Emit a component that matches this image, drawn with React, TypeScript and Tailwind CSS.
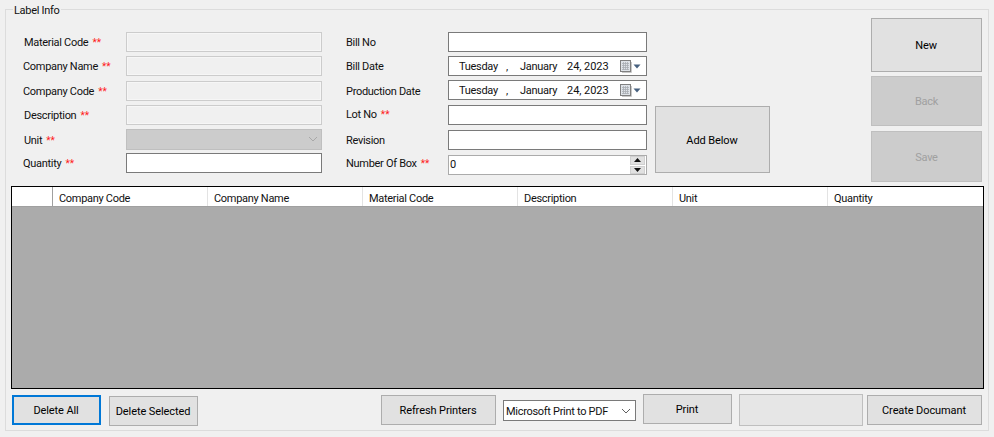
import { ReactNode } from "react";

const base = "border border-[#adadad] bg-[#e1e1e1] text-black tracking-[-0.1px] flex items-center justify-center pt-[3px] pr-px";
const off = "border border-[#bfbfbf] bg-[#cccccc] text-[#a0a0a0] flex items-center justify-center pt-[3px]";
const fieldOff = "w-[196px] h-5 border border-[#cccccc] bg-[#f0f0f0] shadow-[inset_0_0_0_1px_#f6f6f6]";
const fieldOn = "w-[199px] h-5 border border-[#7a7a7a] bg-white";

function Stars() {
  return <span className="ml-1 text-[#ff1a1a] text-[10px] tracking-normal">**</span>;
}

function Row({ label, stars, className, labelClass, children }: { label: string; stars?: boolean; className?: string; labelClass?: string; children: ReactNode }) {
  return (
    <div className={`flex items-center h-5 ${className ?? ""}`}>
      <div className={`w-[102px] shrink-0 whitespace-nowrap pt-[3px] ${labelClass ?? ""}`}>
        {label}
        {stars && <Stars />}
      </div>
      {children}
    </div>
  );
}

function Chevron({ color }: { color: string }) {
  return (
    <svg width="10" height="6" viewBox="0 0 10 6" fill="none" stroke={color}>
      <path d="M1 1l4 4 4-4" />
    </svg>
  );
}

function DateField() {
  return (
    <div className={`${fieldOn} flex items-center pl-[10px]`}>
      <span className="w-[47px] pt-[3px]">Tuesday</span>
      <span className="w-[14px] pt-[3px]">,</span>
      <span className="w-[47px] pt-[3px]">January</span>
      <span className="w-[53px] pt-[3px] tracking-[-0.05px]">24, 2023</span>
      <svg width="22" height="13" viewBox="0 0 22 13">
        <rect x="0.5" y="0.500" width="10" height="11" fill="#dfe3e8" stroke="#808080" />
        <path d="M2 3.500h7M2 5.500h7M2 7.500h7M2 9.500h7M3.500 2v8M5.500 2v8M7.500 2v8" stroke="#a8adb3" strokeWidth="0.8" />
        <path d="M11.500 2v10.500H2" stroke="#c9c9c9" fill="none" />
        <path d="M13.500 4.500h7l-3.500 4z" fill="#46607f" />
      </svg>
    </div>
  );
}

const columns = ["Company Code", "Company Name", "Material Code", "Description", "Unit", "Quantity"];

export default function App() {
  return (
    <div className="w-[994px] h-[437px] overflow-hidden bg-[#f0f0f0] pt-[9px] pl-[5px] text-[11px] tracking-[-0.3px] text-[#111] font-['Roboto',sans-serif]">
      <div className="relative w-[984px] h-[422px] border border-[#dcdcdc]">
        <div className="absolute -top-[6px] left-[7px] bg-[#f0f0f0] px-[1px] leading-[13px]">Label Info</div>

        <div className="flex h-[176px]">
          <div className="ml-[18px] w-[298px] pt-[22px]">
            <Row label="Material Code" stars><div className={fieldOff} /></Row>
            <Row label="Company Name" stars className="mt-1" labelClass="-ml-px mr-px"><div className={fieldOff} /></Row>
            <Row label="Company Code" stars className="mt-[5px]" labelClass="-ml-px mr-px"><div className={fieldOff} /></Row>
            <Row label="Description" stars className="mt-1"><div className={fieldOff} /></Row>
            <Row label="Unit" stars className="mt-1" labelClass="mt-[2px]">
              <div className="w-[196px] h-[21px] border border-[#bfbfbf] bg-[#cccccc] flex items-center justify-end pr-[3px]">
                <Chevron color="#a8a8a8" />
              </div>
            </Row>
            <Row label="Quantity" stars className="mt-1" labelClass="-ml-px mr-px">
              <div className="w-[196px] h-5 border border-[#7a7a7a] bg-white" />
            </Row>
          </div>

          <div className="ml-[24px] w-[301px] pt-[22px]">
            <Row label="Bill No"><div className={fieldOn} /></Row>
            <Row label="Bill Date" className="mt-1"><DateField /></Row>
            <Row label="Production Date" className="mt-1" labelClass="mt-[2px]"><DateField /></Row>
            <Row label="Lot No" stars className="mt-[5px]" labelClass="mb-[2px]"><div className={fieldOn} /></Row>
            <Row label="Revision" className="mt-[5px]"><div className={fieldOn} /></Row>
            <Row label="Number Of Box" stars className="mt-[5px]" labelClass="mb-1">
              <div className="w-[199px] h-5 border border-[#ababab] bg-white flex items-center pl-px">
                <span className="flex-1 pt-px">0</span>
                <div className="w-[15px] h-[18px] mr-px flex flex-col gap-px">
                  <div className="flex-1 bg-[#e1e1e1] border border-[#d0d0d0] flex items-center justify-center">
                    <svg width="7" height="4" viewBox="0 0 7 4"><path d="M3.500 0l3.500 4h-7z" fill="#111" /></svg>
                  </div>
                  <div className="flex-1 bg-[#e1e1e1] border border-[#d0d0d0] flex items-center justify-center">
                    <svg width="7" height="4" viewBox="0 0 7 4"><path d="M0 0h7l-3.500 4z" fill="#111" /></svg>
                  </div>
                </div>
              </div>
            </Row>
          </div>

          <div className="ml-[8px] pt-[96px]">
            <button className={`${base} w-[115px] h-[67px]`}>Add Below</button>
          </div>

          <div className="ml-[101px] pt-2 flex flex-col">
            <button className={`${base} w-[111px] h-[54px]`}>New</button>
            <button disabled className={`${off} w-[111px] h-[50px] mt-1`}>Back</button>
            <button disabled className={`${off} w-[111px] h-[51px] mt-[5px]`}>Save</button>
          </div>
        </div>

        <div className="ml-[5px] w-[973px] h-[203px] border border-black bg-[#ababab]">
          <div className="flex h-5 bg-white border-b border-[#a0a0a0] leading-[23px]">
            <div className="w-[41px] border-r border-[#a0a0a0]" />
            {columns.map((c) => (
              <div key={c} className="w-[155px] pl-[6px] border-r border-[#e3e3e3] last:border-r-0">{c}</div>
            ))}
          </div>
        </div>

        <div className="flex items-start">
          <button className={`${base} ml-[6px] mt-[6px] w-[89px] h-[30px] !border-2 !border-[#0078d7]`}>Delete All</button>
          <button className={`${base} ml-2 mt-[7px] w-[89px] h-[30px]`}>Delete Selected</button>
          <button className={`${base} ml-[183px] mt-[6px] w-[115px] h-[30px]`}>Refresh Printers</button>
          <div className="ml-[7px] mt-[11px] w-[133px] h-[21px] border border-[#7a7a7a] bg-white flex items-center pl-[2px] pr-[4px] justify-between">
            <span className="pt-[3px]">Microsoft Print to PDF</span>
            <Chevron color="#606060" />
          </div>
          <button className={`${base} ml-[7px] mt-[5px] w-[89px] h-[30px]`}>Print</button>
          <button className="ml-[7px] mt-[5px] w-[124px] h-[32px] border border-[#bfbfbf] bg-[#e6e6e6]" />
          <button className={`${base} ml-1 mt-[6px] w-[115px] h-[30px]`}>Create Documant</button>
        </div>
      </div>
    </div>
  );
}
